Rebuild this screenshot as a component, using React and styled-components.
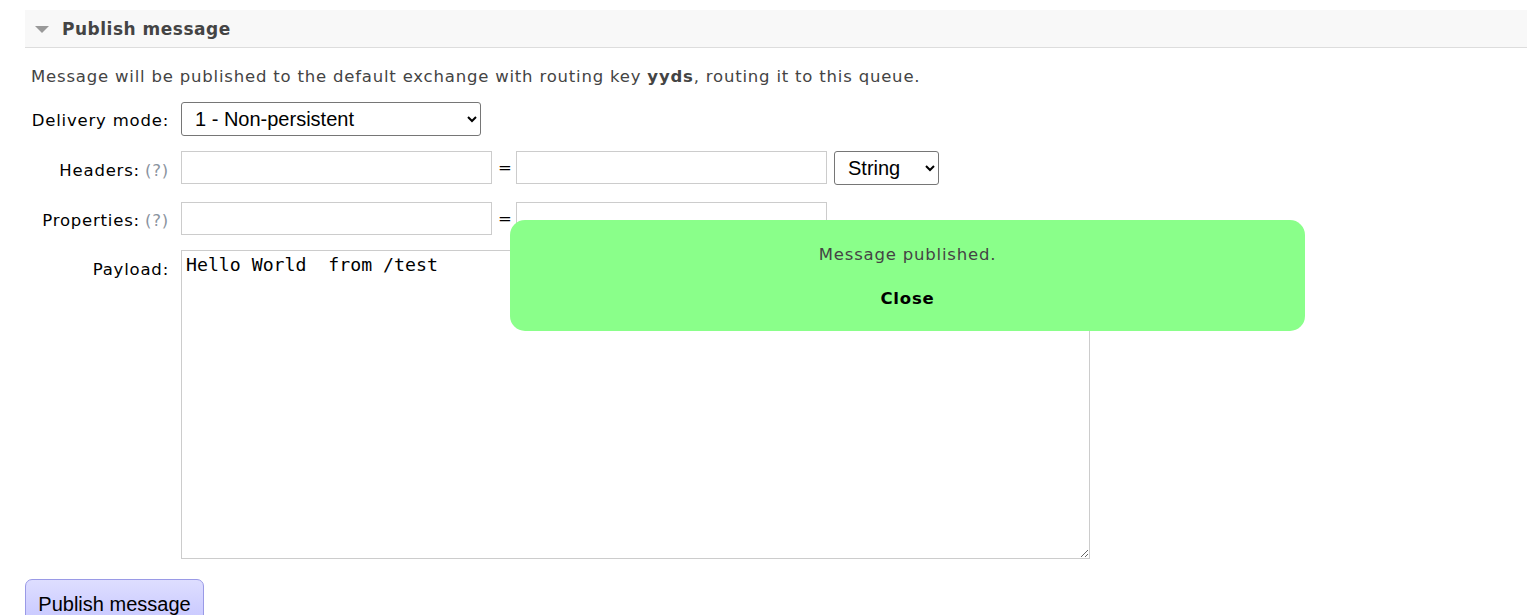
import React from 'react';
import styled, { createGlobalStyle } from 'styled-components';

const GlobalStyle = createGlobalStyle`
	body {
		margin: 0;
		background: #fff;
		font-family: 'DejaVu Sans', Verdana, sans-serif;
		font-size: 16.5px;
		letter-spacing: 0.8px;
		color: #444;
	}
`;

const Page = styled.div`
	position: relative;
	padding: 10px 0 0 25px;
	height: 605px;
	overflow: hidden;
`;

const SectionHeader = styled.h2`
	display: flex;
	align-items: center;
	gap: 13px;
	margin: 0;
	height: 37px;
	padding-left: 10px;
	background: #f8f8f8;
	border-bottom: 1px solid #ddd;
	font-size: 17px;
	letter-spacing: 0.5px;
	font-weight: bold;
	color: #444;
`;

const Triangle = styled.span`
	width: 0;
	height: 0;
	border-left: 7px solid transparent;
	border-right: 7px solid transparent;
	border-top: 7px solid #999;
	margin-top: 2px;
`;

const Intro = styled.p`
	margin: 19px 0 0 6px;
	line-height: 20px;
`;

const Form = styled.div`
	display: grid;
	grid-template-columns: 138px auto;
	column-gap: 12px;
	padding-left: 6px;
	margin-top: 15px;
`;

const Label = styled.label`
	text-align: right;
	color: #000;
	line-height: 20px;
	white-space: nowrap;
	padding-top: ${(p) => p.$top || 8}px;
	margin-bottom: ${(p) => p.$gap || 0}px;
`;

const Help = styled.span`
	color: #8a939e;
	margin-left: 5px;
`;

const Field = styled.div`
	display: flex;
	align-items: flex-start;
	margin-bottom: ${(p) => p.$gap || 0}px;
`;

const Select = styled.select`
	height: 34px;
	width: ${(p) => p.$w}px;
	margin-left: ${(p) => p.$ml || 0}px;
	padding: 0 6px 0 9px;
	border: 1px solid #767676;
	border-radius: 3px;
	background: #fff;
	font-family: 'Liberation Sans', Arial, sans-serif;
	font-size: 20px;
	letter-spacing: 0;
	color: #000;
`;

const TextInput = styled.input`
	box-sizing: border-box;
	width: 311px;
	height: 33px;
	border: 1px solid #ccc;
	margin: 0;
	padding: 2px 6px;
	font-family: 'DejaVu Sans Mono', monospace;
	font-size: 18px;
`;

const Equals = styled.span`
	width: 12px;
	margin: 0 6px;
	line-height: 33px;
	color: #000;
	letter-spacing: 0;
	text-align: center;
`;

const Payload = styled.textarea`
	box-sizing: border-box;
	width: 909px;
	height: 309px;
	margin: 0;
	border: 1px solid #ccc;
	padding: 3px 4px;
	font-family: 'DejaVu Sans Mono', monospace;
	font-size: 18.2px;
	letter-spacing: 0;
	line-height: 22px;
	color: #000;
	resize: both;
`;

const PublishButton = styled.button`
	display: block;
	margin-top: 20px;
	width: 179px;
	height: 50px;
	padding: 0;
	border: 1px solid #9a9ae6;
	border-radius: 7px;
	background: linear-gradient(#dedeff, #c4c4ff);
	font-family: 'Liberation Sans', Arial, sans-serif;
	font-size: 20px;
	color: #000;
`;

const Popup = styled.div`
	position: absolute;
	left: 510px;
	top: 220px;
	width: 795px;
	height: 111px;
	box-sizing: border-box;
	padding-top: 24px;
	background: #8aff8a;
	border-radius: 15px;
	text-align: center;
`;

const PopupText = styled.p`
	margin: 0;
	line-height: 22px;
	color: #444;
`;

const CloseLink = styled.span`
	display: inline-block;
	margin-top: 22px;
	line-height: 22px;
	font-weight: bold;
	color: #000;
`;

export default function App() {
	return (
		<>
			<GlobalStyle />
			<Page>
				<SectionHeader>
					<Triangle />
					Publish message
				</SectionHeader>
				<Intro>
					Message will be published to the default exchange with routing key <b>yyds</b>, routing it to this queue.
				</Intro>
				<Form>
					<Label $top={9} $gap={15}>Delivery mode:</Label>
					<Field $gap={15}>
						<Select $w={300} defaultValue='1'>
							<option value='1'>1 - Non-persistent</option>
							<option value='2'>2 - Persistent</option>
						</Select>
					</Field>

					<Label $top={10} $gap={17}>
						Headers:<Help>(?)</Help>
					</Label>
					<Field $gap={17}>
						<TextInput />
						<Equals>=</Equals>
						<TextInput />
						<Select $w={105} $ml={7} defaultValue='string'>
							<option value='string'>String</option>
							<option value='number'>Number</option>
							<option value='boolean'>Boolean</option>
						</Select>
					</Field>

					<Label $top={9} $gap={15}>
						Properties:<Help>(?)</Help>
					</Label>
					<Field $gap={15}>
						<TextInput />
						<Equals>=</Equals>
						<TextInput />
					</Field>

					<Label $top={10}>Payload:</Label>
					<Field>
						<Payload defaultValue='Hello World  from /test' />
					</Field>
				</Form>
				<PublishButton>Publish message</PublishButton>
				<Popup>
					<PopupText>Message published.</PopupText>
					<CloseLink>Close</CloseLink>
				</Popup>
			</Page>
		</>
	);
}
